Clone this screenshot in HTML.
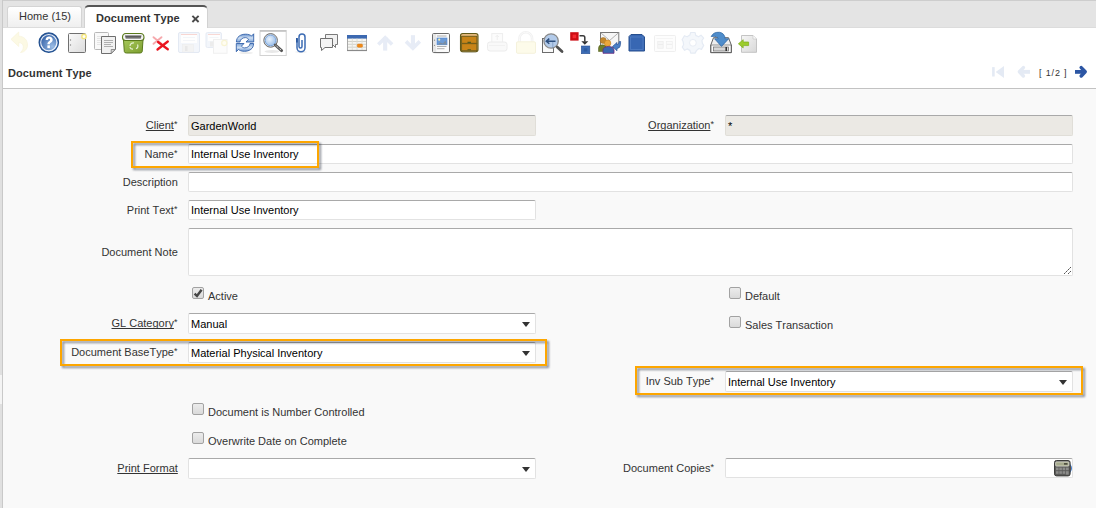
<!DOCTYPE html>
<html><head><meta charset="utf-8">
<style>
*{box-sizing:border-box;margin:0;padding:0}
html,body{width:1096px;height:508px;overflow:hidden}
body{position:relative;font-kerning:none;background:#f9f9f9;font-family:"Liberation Sans",sans-serif;font-size:11px;color:#333}
.a{position:absolute}
.lbl{position:absolute;white-space:nowrap;text-align:right;line-height:13px;color:#333}
.u{text-decoration:underline;text-decoration-skip-ink:none}
.req{font-size:9px;position:relative;top:-2.5px;margin-left:0}
.inp{position:absolute;height:21px;background:#fff;border:1px solid #e2e2e2;border-top-color:#a9a9a9;border-radius:2px}
.tb{height:20px}.tb .val{top:3px}
.dis{background:#ebe9e4;border-color:#e0ded8;border-top-color:#a9a9a9}
.val{position:absolute;left:2px;top:4px;line-height:13px;color:#000;white-space:nowrap}
.arr{position:absolute;right:5px;top:8px;width:0;height:0;border-left:4px solid transparent;border-right:4px solid transparent;border-top:5px solid #333}
.cb{position:absolute;width:12px;height:12px;border:1px solid #a2a2a2;border-radius:2px;background:linear-gradient(#ececec,#dadada)}
.cbt{position:absolute;line-height:13px;white-space:nowrap;color:#333}
.hl{position:absolute;z-index:5;border:2px solid #fda600;filter:drop-shadow(2px 2px 1px rgba(40,48,64,.55))}
</style></head>
<body>
<!-- left strip -->
<div class="a" style="left:0;top:0;width:2px;height:508px;background:#e0e0e0"></div>
<div class="a" style="left:2px;top:0;width:1px;height:508px;background:#c9c9c9"></div>
<div class="a" style="left:0;top:375px;width:2px;height:29px;background:#f4f4f4"></div>
<!-- tab bar -->
<div class="a" style="left:3px;top:0;width:1093px;height:28px;background:#e4e4e4;border-top:1px solid #cdcdcd;border-bottom:1px solid #dcdcdc"></div>
<div class="a" style="left:7px;top:6px;width:75px;height:21px;border:1px solid #d4d4d4;border-bottom:none;border-radius:3px 3px 0 0;background:linear-gradient(#ffffff,#efefef)"></div>
<div class="a" style="left:19px;top:10px;line-height:13px;color:#333">Home (15)</div>
<div class="a" style="left:84px;top:5px;width:124px;height:24px;border-top:2px solid #555;border-left:1px solid #d2d2d2;border-right:1px solid #d2d2d2;border-radius:5px 5px 0 0;background:#fff"></div>
<div class="a" style="left:96px;top:12px;line-height:13px;font-weight:bold;letter-spacing:.1px;color:#333">Document Type</div>
<svg class="a" style="left:190px;top:13px" width="11" height="11" viewBox="0 0 11 11"><path d="M2.4 2.9 L8.6 9 M8.6 2.9 L2.4 9" stroke="#4a4a4a" stroke-width="1.9"/></svg>
<!-- toolbar / title white area -->
<div class="a" style="left:3px;top:28px;width:1093px;height:60px;background:#fff"></div>
<div class="a" style="left:3px;top:88px;width:1093px;height:1px;background:#c2c2c2"></div>
<div class="a" style="left:8px;top:67px;line-height:13px;font-weight:bold;letter-spacing:.1px;color:#333">Document Type</div>
<div class="a" style="left:1039px;top:68px;line-height:11px;font-size:9px;letter-spacing:.85px;color:#333">[ 1/2 ]</div>

<svg class="a" style="left:0;top:0" width="1096" height="90" viewBox="0 0 1096 90">
<defs>
<radialGradient id="gHelp" cx="0.68" cy="0.7" r="0.75"><stop offset="0" stop-color="#9bbde6"/><stop offset="1" stop-color="#2d5ba3"/></radialGradient>
<linearGradient id="gBin" x1="0" y1="0" x2="1" y2="1"><stop offset="0" stop-color="#a6c85a"/><stop offset="1" stop-color="#7d9e30"/></linearGradient><linearGradient id="gOpen" x1="0" y1="0" x2="0" y2="1"><stop offset="0" stop-color="#4a4a4a"/><stop offset="1" stop-color="#8a8a8a"/></linearGradient>
<radialGradient id="gLens" cx="0.4" cy="0.4" r="0.6"><stop offset="0" stop-color="#eaf3fd"/><stop offset="1" stop-color="#9fc1ea"/></radialGradient>
<linearGradient id="gPage" x1="0" y1="0" x2="1" y2="1"><stop offset="0" stop-color="#fafafa"/><stop offset="1" stop-color="#dcdcdc"/></linearGradient>
<linearGradient id="gRf" x1="0" y1="0" x2="0" y2="1"><stop offset="0" stop-color="#5d8acb"/><stop offset="0.5" stop-color="#cfdff2"/><stop offset="1" stop-color="#7ea5d8"/></linearGradient>
<linearGradient id="gImp" x1="0" y1="0" x2="1" y2="1"><stop offset="0" stop-color="#f6f6f6"/><stop offset="1" stop-color="#d8d8d8"/></linearGradient>
</defs>
<!-- 1 undo faded -->
<path d="M11 39.3 L18.7 32 L18.7 36.2 C24 36.2 27.5 40 27.5 45 C27.5 49 24.5 52.3 20.5 52.5 C22.8 50.5 23.3 48.5 23.3 46.8 C23.3 44.2 21.5 42.6 18.7 42.6 L18.7 46.5 Z" fill="#fcf9e4" stroke="#f8f3da" stroke-width="0.7"/>
<!-- 2 help -->
<circle cx="48.8" cy="42.6" r="9.7" fill="url(#gHelp)" stroke="#22508f" stroke-width="1.2"/>
<circle cx="48.8" cy="42.6" r="8.1" fill="none" stroke="#fff" stroke-width="1.1" opacity="0.9"/>
<path d="M45.6 40 C45.6 37.6 47.3 36.5 49.1 36.5 C51.3 36.5 52.7 37.8 52.7 39.7 C52.7 41.5 51.5 42.2 50.4 42.9 C49.9 43.2 49.8 43.6 49.8 44.3 L47.4 44.3 C47.4 43 47.8 42.2 48.8 41.5 C49.6 41 50.1 40.6 50.1 39.8 C50.1 39 49.7 38.7 49.1 38.7 C48.4 38.7 48.1 39.2 48.1 40 Z" fill="#fff"/>
<rect x="47.4" y="45.4" width="2.5" height="2.7" fill="#fff"/>
<!-- 3 new -->
<rect x="68.5" y="33.5" width="17" height="19" rx="1" fill="url(#gPage)" stroke="#707070" stroke-width="1"/>
<circle cx="70.5" cy="40" r="0.7" fill="#888"/><circle cx="70.5" cy="45" r="0.7" fill="#888"/>
<circle cx="84" cy="36.4" r="2.2" fill="#fffef4" stroke="#f3e57c" stroke-width="1.4"/>
<!-- 4 copy -->
<rect x="94.5" y="32.5" width="14" height="17" rx="1" fill="#f9f9f9" stroke="#b8b8b8"/>
<path d="M97 36.5h9M97 38.5h9M97 40.5h9M97 42.5h9M97 44.5h9" stroke="#dedede" stroke-width="0.8"/>
<path d="M101.5 36.5 h14 v12.8 l-4.3 4.2 h-9.7 z" fill="#f1f1f1" stroke="#6e6e6e"/>
<path d="M104 40.5h9M104 42.5h9M104 44.5h7M104 46.5h9" stroke="#a8a8a8" stroke-width="0.9"/>
<path d="M111.2 53.3 V49.5 H115.3 Z" fill="#d8d8d8" stroke="#7a7a7a" stroke-width="0.8"/>
<!-- 5 bin -->
<path d="M123.5 40 L124.3 51.5 Q124.5 53 126.5 53 H140 Q142 53 142.2 51.5 L143 40 Z" fill="url(#gBin)" stroke="#5a7a1c" stroke-width="1"/>
<path d="M122.5 37.5 Q122.5 33.5 126 33.5 H140.5 Q144 33.5 144 37.5 Q144 40.5 141 40.5 H125.5 Q122.5 40.5 122.5 37.5 Z" fill="#f4f4f4" stroke="#5a7a1c" stroke-width="1.1"/>
<path d="M125 35.6 H141.5 L140.8 38.8 H125.7 Z" fill="url(#gOpen)"/>
<path d="M130 46 a3.3 3.3 0 0 1 4 -3 M137.5 44.5 a3.3 3.3 0 0 1 -1.5 4.3 M133 49.2 a3.3 3.3 0 0 1 -3.2 -2" fill="none" stroke="#e6f0d2" stroke-width="1.2"/>
<!-- 6 red X -->
<path d="M153.5 37.2 L161.5 43.8 M161.5 37.2 L153.5 43.8" stroke="#f6a9ad" stroke-width="1.9" stroke-linecap="round"/>
<path d="M158 42 L167.8 49.2 M167.8 41.5 L157.5 49.5" stroke="#ea1520" stroke-width="2.3" stroke-linecap="round"/>
<!-- 7 save faded -->
<rect x="178.5" y="32.5" width="21" height="20" rx="1.5" fill="#f3f6fb" stroke="#e3e9f3"/>
<rect x="181" y="34" width="16" height="9" fill="#fefefe"/>
<path d="M181 34.5 H197" stroke="#f8d6d2" stroke-width="1"/>
<path d="M183 37.5 H195 M183 40.5 H195" stroke="#eef1f5" stroke-width="0.7"/>
<rect x="182.5" y="44.5" width="11" height="7.5" fill="#f3f3f3" stroke="#ececec" stroke-width="0.5"/>
<rect x="185" y="46" width="2.5" height="5" fill="#e8e8e8"/>
<!-- 8 save new faded -->
<rect x="206" y="32.5" width="15.5" height="15" rx="1.5" fill="#f3f6fb" stroke="#e6ebf4"/>
<rect x="208" y="34" width="12" height="7" fill="#fefefe"/>
<path d="M208 34.5 H220" stroke="#f8d8d4" stroke-width="1"/>
<path d="M209.5 37.5 H218.5" stroke="#eef1f5" stroke-width="0.7"/>
<rect x="213.5" y="39.5" width="13.5" height="13.8" fill="#fcfcfc" stroke="#f0f0f0"/>
<rect x="210" y="41.5" width="3.5" height="5" fill="#ececec"/>
<circle cx="224.3" cy="43" r="2.6" fill="#fffdf2" stroke="#f8f4d4" stroke-width="1.2"/>
<!-- 9 refresh -->
<ellipse cx="246" cy="53" rx="7" ry="0.9" fill="#ececec"/>
<path id="rfA" d="M236.4 42 C236.4 36.8 240.6 34.2 245.6 34.2 C248.4 34.2 250.4 35 251.5 36 L253.7 33.8 V42 H246 L248.6 39.3 C247.7 38.3 246.6 37.6 245.4 37.6 C242.3 37.6 240.2 39.5 240 42 Z" fill="url(#gRf)" stroke="#2d5ca6" stroke-width="0.85"/>
<path d="M236.4 42 C236.4 36.8 240.6 34.2 245.6 34.2 C248.4 34.2 250.4 35 251.5 36 L253.7 33.8 V42 H246 L248.6 39.3 C247.7 38.3 246.6 37.6 245.4 37.6 C242.3 37.6 240.2 39.5 240 42 Z" fill="url(#gRf)" stroke="#2d5ca6" stroke-width="0.85" transform="rotate(180 245 42.75)"/>
<!-- 10 find pressed -->
<rect x="260" y="30.5" width="26.2" height="25" fill="#fff" stroke="#d2d2d2" stroke-width="1"/>
<path d="M260 31 H286.2" stroke="#c2c2c2" stroke-width="1.6"/>
<ellipse cx="272" cy="51.5" rx="7.5" ry="1.4" fill="#e8e8e8"/>
<circle cx="270.6" cy="40.4" r="6.8" fill="#e9e9e9" stroke="#6a6a6a" stroke-width="1"/>
<circle cx="270.6" cy="40.4" r="5.4" fill="url(#gLens)" stroke="#78a4dc" stroke-width="1"/>
<path d="M275.3 45 L281.6 50.6" stroke="#555" stroke-width="2.9" stroke-linecap="round"/>
<path d="M275.6 45.3 L281.2 50.2" stroke="#eee" stroke-width="1" stroke-dasharray="1.2 0.8"/>
<!-- 11 paperclip -->
<ellipse cx="301" cy="52" rx="6" ry="0.7" fill="#ececec"/>
<path d="M297 38.5 V47.8 A4 4 0 0 0 305 47.8 V37 A3 3 0 0 0 299 37 V46.5 A1.5 1.5 0 0 0 302 46.5 V40" fill="none" stroke="#3d6cb4" stroke-width="1.5"/>
<rect x="296" y="38" width="1.8" height="4.5" fill="#2d5aa0"/>
<!-- 12 chat -->
<path d="M325.5 34.5 h12 v10 h-2 l0 3 l-3 -3 h-7 z" fill="#f1f1f1" stroke="#7a7a7a" stroke-linejoin="round"/>
<path d="M320.5 38.5 h12 v9 h-7.5 l-3.5 3 v-3 h-1 z" fill="#f4f4f4" stroke="#707070" stroke-linejoin="round"/>
<!-- 13 grid -->
<rect x="347.5" y="35.5" width="19" height="15" fill="#f6f6f3" stroke="#a8a8a8"/>
<rect x="347" y="35" width="20" height="3.6" fill="#3c69b1"/>
<path d="M348 41.5h18M348 44.3h18M348 47.2h18" stroke="#cdcdc6" stroke-width="0.9"/>
<path d="M352.3 38.6v11.5M357 38.6v11.5M362 38.6v11.5" stroke="#dcdcd4" stroke-width="0.9"/>
<rect x="357.2" y="44" width="5.4" height="3.3" rx="1.4" fill="#f08a18" stroke="#d87812" stroke-width="0.5"/>
<path d="M347 50.5 H367" stroke="#8a8a8a" stroke-width="1.2"/>
<!-- 14 up faded -->
<path d="M378.3 44.5 L385.2 37.7 L392.1 44.5" fill="none" stroke="#e7ecf6" stroke-width="3.6"/>
<rect x="383.1" y="37" width="4.1" height="13.6" fill="#e7ecf6"/>
<!-- 15 down faded -->
<path d="M406 41.4 L412.9 48.2 L419.8 41.4" fill="none" stroke="#e7ecf6" stroke-width="3.6"/>
<rect x="410.9" y="35.2" width="4.1" height="13.6" fill="#e7ecf6"/>
<!-- 16 report -->
<ellipse cx="441" cy="53" rx="8" ry="0.8" fill="#e4e4e4"/>
<rect x="432.5" y="33.5" width="17" height="19" rx="1.2" fill="#fbfbfb" stroke="#6c6c6c"/>
<rect x="433" y="34" width="3.2" height="18" fill="#e6e6e6"/>
<circle cx="434.5" cy="40.2" r="0.6" fill="#888"/><circle cx="434.5" cy="45.3" r="0.6" fill="#888"/>
<rect x="437" y="38" width="10" height="6.8" fill="#6d9bd6" stroke="#4a84d0" stroke-width="0.6"/>
<path d="M437.3 44.5 L440.5 42.5 L443 43.5 L445.5 40.5 L446.7 44.5 Z" fill="#7b8da0"/>
<circle cx="439.2" cy="39.7" r="1.1" fill="#f4f0b0"/>
<path d="M437 36h9.5M437 46.5h9.5M437 48.7h7.5" stroke="#9a9a9a" stroke-width="0.8"/>
<!-- 17 archive -->
<ellipse cx="469" cy="52.3" rx="8" ry="0.8" fill="#dedede"/>
<rect x="460.5" y="33.5" width="17.5" height="18.3" rx="2.2" fill="#e3b77a" stroke="#615918" stroke-width="1.1"/>
<rect x="461.6" y="36.3" width="15.3" height="7" fill="#c88418" stroke="#6a5a18" stroke-width="0.9"/>
<rect x="461.6" y="43.7" width="15.3" height="7" fill="#c88418" stroke="#6a5a18" stroke-width="0.9"/>
<path d="M467.5 42.4h3.4M467.5 49.8h3.4" stroke="#4f5a20" stroke-width="1.1"/>
<!-- 18 print faded -->
<rect x="491.8" y="33.6" width="10.8" height="9" fill="#fcfcfc" stroke="#eeeeee"/>
<path d="M497.2 35.5 V40 M495.5 37 L497.2 35.3 L498.9 37" fill="none" stroke="#ececec" stroke-width="0.9"/>
<rect x="487.5" y="42" width="19.5" height="9" rx="2.5" fill="#f9f9f9" stroke="#ececec"/>
<path d="M489 45.5 H505" stroke="#efefef" stroke-width="0.8"/>
<!-- 19 lock faded -->
<path d="M519.5 42 V38.5 A6.3 6.3 0 0 1 532.1 38.5 V42" fill="none" stroke="#f1f1f1" stroke-width="2.6"/>
<path d="M519.5 42 V38.5 A6.3 6.3 0 0 1 532.1 38.5 V42" fill="none" stroke="#fafafa" stroke-width="1"/>
<rect x="516.5" y="41.8" width="19" height="11.5" rx="1.2" fill="#fdfbea" stroke="#f5f2dc"/>
<!-- 20 zoom across -->
<rect x="542.5" y="38.5" width="11" height="14" fill="#fafafa" stroke="#6c6c6c"/>
<circle cx="551.1" cy="41" r="7.2" fill="#b3cbea" stroke="#8a8a8a" stroke-width="1.3"/>
<path d="M557.2 47 L562 51.5" stroke="#505050" stroke-width="2.8" stroke-linecap="round"/>
<path d="M555.5 41.2 H546.5 M549.3 38.6 L546.3 41.2 L549.3 43.8" fill="none" stroke="#2d4f7e" stroke-width="1.5"/>
<path d="M552.8 42 V48.5" stroke="#4d6f9e" stroke-width="0.6" opacity="0.7"/>
<!-- 21 requests -->
<rect x="570.2" y="32.2" width="8.4" height="8.4" fill="#cc0d14"/>
<rect x="572.6" y="34.6" width="3.6" height="3.6" fill="#f42a30"/>
<path d="M579.5 35.8 H583 Q584.8 35.8 584.8 37.6 V41.6" fill="none" stroke="#3a3a3a" stroke-width="1.5"/>
<path d="M581.3 41.3 H588.3 L584.8 44.7 Z" fill="#333"/>
<rect x="581.3" y="46" width="8.5" height="7.7" fill="#3b6cb5" stroke="#2a5294" stroke-width="0.6"/>
<rect x="583.8" y="48.3" width="3.5" height="3.2" fill="#2e5ba0"/>
<!-- 22 email people -->
<rect x="600.5" y="32.5" width="18.3" height="14.8" fill="#f6f6f6" stroke="#777"/>
<path d="M600.8 32.8 L609.6 40.5 L618.5 32.8" fill="none" stroke="#a0a0a0" stroke-width="0.8"/>
<circle cx="603.2" cy="40.5" r="3" fill="#c4892e" stroke="#9a6a20" stroke-width="0.5"/>
<path d="M598.5 51.5 v-3.5 a4 3.2 0 0 1 8 0 v3.5 z" fill="#6e7d2a" stroke="#4f5a18" stroke-width="0.5"/>
<circle cx="607.6" cy="43.2" r="3.2" fill="#eaa73c" stroke="#c07a18" stroke-width="0.6"/>
<path d="M603 53.3 v-3.4 a5.5 3.4 0 0 1 11 0 v3.4 z" fill="#3a68b0" stroke="#6a2a80" stroke-width="0.8"/>
<path d="M612.5 46.5 L617 42.5 V44.8 Q619.3 44.2 619.3 41.5 H620.6 Q621 48.2 617 48.6 V50.8 Z" fill="#4a80c8" stroke="#2a5294" stroke-width="0.7"/>
<!-- 23 blue square -->
<path d="M631 34.5 H642 L644.5 37 V51 H629 V36.5 Z" fill="#3867b3" stroke="#274f8e" stroke-width="1"/>
<rect x="630.5" y="37" width="12.5" height="12.5" fill="none" stroke="#5a86c8" stroke-width="0.6"/>
<!-- 24 faded grid -->
<rect x="654.5" y="35.5" width="21" height="16" rx="1" fill="#fdfdfd" stroke="#efefef"/>
<path d="M656.5 38.5 H673" stroke="#f2f2f2" stroke-width="0.8"/>
<rect x="657.7" y="41.5" width="5.5" height="6.8" fill="#f6f6f6" stroke="#eeeeee" stroke-width="0.8"/>
<rect x="666.3" y="41.5" width="6" height="6.8" fill="#fbfbfb" stroke="#efefef" stroke-width="0.8"/>
<path d="M658 44.5 H663 M666.5 44.3 H672" stroke="#ededed" stroke-width="1"/>
<!-- 25 gear faded -->
<g transform="translate(692.9,42.8)">
<path d="M-2.2 -10.3 H2.2 L2.8 -7.4 L5.6 -6 L8.1 -7.6 L10.8 -4.7 L9 -2.3 L9.5 0.6 L10.8 2.6 L8.6 6.6 L6 5.7 L3.5 7.8 L2.2 10.3 H-2.2 L-3 7.6 L-5.8 6.1 L-8.3 7.5 L-10.6 4.3 L-9.3 2 L-9.7 -1 L-10.8 -3 L-8.5 -7.1 L-5.8 -6 L-3 -7.7 Z" fill="#f4f7fb" stroke="#e5ebf4" stroke-width="1.2" stroke-linejoin="round"/>
<circle r="3.4" fill="#fff" stroke="#e8edf5" stroke-width="1"/>
</g>
<!-- 26 export -->
<path d="M710.8 52.6 V45 L713.5 37.7 H728.5 L731.3 45 V52.6 Z" fill="#eeeeee" stroke="#636363" stroke-width="1"/>
<rect x="711.3" y="45.2" width="19.5" height="7" fill="#fafafa"/>
<path d="M710.8 45 H731.3" stroke="#7a7a7a" stroke-width="0.8"/>
<path d="M710.8 52.6 V45 M731.3 45 V52.6 H710.8" fill="none" stroke="#636363" stroke-width="1"/>
<rect x="713.6" y="47" width="15" height="4" fill="#d6d6d6" stroke="#6a6a6a" stroke-width="0.7"/>
<rect x="725.5" y="47" width="1.4" height="4" fill="#222"/>
<path d="M711.2 36.5 Q713.5 31.8 719.5 32.3 Q724.5 33 725.2 38.8 H728.6 L721.5 46.4 L714.6 38.8 H718.2 Q717.8 35.6 711.2 36.5 Z" fill="#4f8dcb" stroke="#2e67a5" stroke-width="0.8" stroke-linejoin="round"/>
<!-- 27 import -->
<path d="M741.5 35.5 H753 L756.5 39 V52.3 H741.5 Z" fill="url(#gImp)" stroke="#c4c4c4"/>
<path d="M753 35.5 V39 H756.5" fill="#fafafa" stroke="#c8c8c8" stroke-width="0.7"/>
<path d="M738.4 43.8 L743.2 39.7 V42 H748.6 V45.6 H743.2 V47.9 Z" fill="#9ccc2c" stroke="#7cae18" stroke-width="0.7" stroke-linejoin="round"/>
<!-- nav -->
<rect x="992.1" y="67.1" width="2.6" height="9.4" fill="#e4eaf4"/>
<path d="M1004 65.9 V78 L995.7 72 Z" fill="#e4eaf4"/>
<path d="M1023.4 67.6 L1019.4 71.8 L1023.4 76" fill="none" stroke="#e4eaf4" stroke-width="3.5" stroke-linecap="round" stroke-linejoin="round"/><rect x="1021" y="69.9" width="9" height="3.9" fill="#e4eaf4"/>
<path d="M1081.2 67.6 L1085.2 71.8 L1081.2 76" fill="none" stroke="#2c56a4" stroke-width="3.5" stroke-linecap="round" stroke-linejoin="round"/><rect x="1075" y="70" width="9" height="3.8" fill="#2c56a4"/>
</svg>

<!-- FORM -->
<div class="hl" style="left:131px;top:141px;width:188px;height:27px"></div>
<div class="hl" style="left:60px;top:339px;width:487px;height:27px"></div>
<div class="hl" style="left:635px;top:366px;width:448px;height:29px"></div>

<div class="lbl" style="right:918.6px;top:119px"><span class="u">Client</span><span class="req">*</span></div>
<div class="inp dis" style="left:188px;top:115px;width:348px"><div class="val">GardenWorld</div></div>
<div class="lbl" style="right:382px;top:119px"><span class="u">Organization</span><span class="req">*</span></div>
<div class="inp dis" style="left:725px;top:115px;width:348px"><div class="val">*</div></div>

<div class="lbl" style="right:918.6px;top:148px">Name<span class="req">*</span></div>
<div class="inp tb" style="left:188px;top:144px;width:885px"><div class="val">Internal Use Inventory</div></div>

<div class="lbl" style="right:918.2px;top:176px">Description</div>
<div class="inp tb" style="left:188px;top:172px;width:885px"></div>

<div class="lbl" style="right:918.6px;top:204px">Print Text<span class="req">*</span></div>
<div class="inp tb" style="left:188px;top:200px;width:348px"><div class="val">Internal Use Inventory</div></div>

<div class="lbl" style="right:918.2px;top:246px">Document Note</div>
<div class="inp" style="left:188px;top:228px;width:885px;height:48px">
<svg class="a" style="right:0;bottom:0" width="9" height="9" viewBox="0 0 9 9" shape-rendering="crispEdges"><rect x="1" y="7" width="1" height="1" fill="#555"/><rect x="2" y="6" width="1" height="1" fill="#999"/><rect x="3" y="5" width="1" height="1" fill="#555"/><rect x="4" y="4" width="1" height="1" fill="#999"/><rect x="5" y="3" width="1" height="1" fill="#555"/><rect x="6" y="2" width="1" height="1" fill="#999"/><rect x="7" y="1" width="1" height="1" fill="#555"/><rect x="5" y="7" width="1" height="1" fill="#555"/><rect x="6" y="6" width="1" height="1" fill="#999"/><rect x="7" y="5" width="1" height="1" fill="#555"/></svg>
</div>

<div class="cb" style="left:192px;top:287px"><svg class="a" style="left:0px;top:0px" width="10" height="10" viewBox="0 0 10 10"><path d="M1.6 5.6 L4 8 L8.6 1.8" fill="none" stroke="#454545" stroke-width="2.4"/></svg></div>
<div class="cbt" style="left:208px;top:290px">Active</div>
<div class="cb" style="left:729px;top:287px"></div>
<div class="cbt" style="left:745px;top:290px">Default</div>

<div class="lbl" style="right:918.6px;top:317px"><span class="u">GL Category</span><span class="req">*</span></div>
<div class="inp" style="left:188px;top:313px;width:348px"><div class="val">Manual</div><div class="arr"></div></div>
<div class="cb" style="left:729px;top:316px"></div>
<div class="cbt" style="left:745px;top:319px">Sales Transaction</div>

<div class="lbl" style="right:918.6px;top:346px">Document BaseType<span class="req">*</span></div>
<div class="inp" style="left:188px;top:342px;width:348px"><div class="val">Material Physical Inventory</div><div class="arr"></div></div>

<div class="lbl" style="right:382px;top:375px">Inv Sub Type<span class="req">*</span></div>
<div class="inp" style="left:725px;top:371px;width:348px"><div class="val">Internal Use Inventory</div><div class="arr"></div></div>

<div class="cb" style="left:192px;top:403px"></div>
<div class="cbt" style="left:208px;top:406px">Document is Number Controlled</div>
<div class="cb" style="left:192px;top:432px"></div>
<div class="cbt" style="left:208px;top:435px">Overwrite Date on Complete</div>

<div class="lbl" style="right:918.2px;top:462px"><span class="u">Print Format</span></div>
<div class="inp" style="left:188px;top:458px;width:348px"><div class="arr"></div></div>
<div class="lbl" style="right:382px;top:462px">Document Copies<span class="req">*</span></div>
<div class="inp tb" style="left:725px;top:458px;width:348px">
<svg class="a" style="left:328px;top:1px" width="19" height="17" viewBox="0 0 19 17">
<path d="M16 4.5 Q18.8 8 16 12.2" fill="#e07a10" stroke="#2f7ae0" stroke-width="1.1"/>
<rect x="0.5" y="0.5" width="15.6" height="15.4" rx="2" fill="#5c5c5a" stroke="#3c3c3a"/>
<rect x="1.7" y="1.9" width="13.2" height="4.2" rx="0.8" fill="#a6aa8c" stroke="#ecece2" stroke-width="0.7"/>
<rect x="10" y="3.2" width="3.5" height="1.4" fill="#3a3a30"/>
<g fill="#8c8c8a"><rect x="2" y="7.6" width="2.6" height="2.6"/><rect x="5.3" y="7.6" width="2.6" height="2.6"/><rect x="8.6" y="7.6" width="2.6" height="2.6"/><rect x="11.9" y="7.6" width="2.8" height="2.6"/>
<rect x="2" y="11.2" width="2.6" height="2.6"/><rect x="5.3" y="11.2" width="2.6" height="2.6"/><rect x="8.6" y="11.2" width="2.6" height="2.6"/><rect x="11.9" y="11.2" width="2.8" height="3.4"/></g>
</svg>
</div>
</body></html>
